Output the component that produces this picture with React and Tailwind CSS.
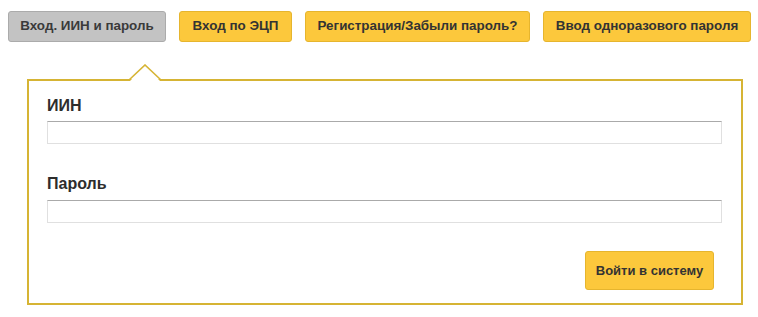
import React from "react";

const tabs = [
  { label: "Вход. ИИН и пароль", active: true, w: "w-[158px]" },
  { label: "Вход по ЭЦП", active: false, w: "w-[113px]" },
  { label: "Регистрация/Забыли пароль?", active: false, w: "w-[225px]" },
  { label: "Ввод одноразового пароля", active: false, w: "w-[208px]" },
];

export default function App() {
  return (
    <div className="w-[758px] h-[317px] bg-white font-['Liberation_Sans',Arial,sans-serif] text-[#333]">
      <div className="flex pl-[8px] pt-[11px] gap-[13px]">
        {tabs.map((t) => (
          <button
            key={t.label}
            className={`${t.w} h-[31px] rounded-[3px] border text-[13.4px] font-bold flex items-center justify-center ${
              t.active
                ? "bg-[#c3c3c3] border-[#ababab] text-[#3a3a3a]"
                : "bg-[#fcc83c] border-[#e6b52e] text-[#333]"
            }`}
          >
            {t.label}
          </button>
        ))}
      </div>
      <div className="relative ml-[27px] mt-[37px] w-[716px] h-[226px] border-2 border-[#d6b434] px-[18px] pt-[16px]">
        <svg
          className="absolute left-[99px] top-[-17px]"
          width="34"
          height="17"
          viewBox="0 0 34 17"
        >
          <polygon points="2,17 17,2 32,17" fill="#fff" />
          <polyline points="1,16 17,1 33,16" fill="none" stroke="#d6b434" strokeWidth="1.6" />
        </svg>
        <div className="text-[16px] leading-[18px] font-bold text-[#2d2d2d]">ИИН</div>
        <div className="mt-[6px] h-[23px] w-[675px] border border-[#e0e0e0] border-t-[#aaaaaa]"></div>
        <div className="mt-[31px] text-[16px] leading-[18px] font-bold text-[#2d2d2d]">Пароль</div>
        <div className="mt-[7px] h-[23px] w-[675px] border border-[#e0e0e0] border-t-[#aaaaaa]"></div>
        <div className="flex justify-end pr-[9px] mt-[28px]">
          <button className="w-[129px] h-[39px] rounded-[3px] border border-[#e6b52e] bg-[#fcc83c] text-[13px] font-bold text-[#333] flex items-center justify-center">
            Войти в систему
          </button>
        </div>
      </div>
    </div>
  );
}
